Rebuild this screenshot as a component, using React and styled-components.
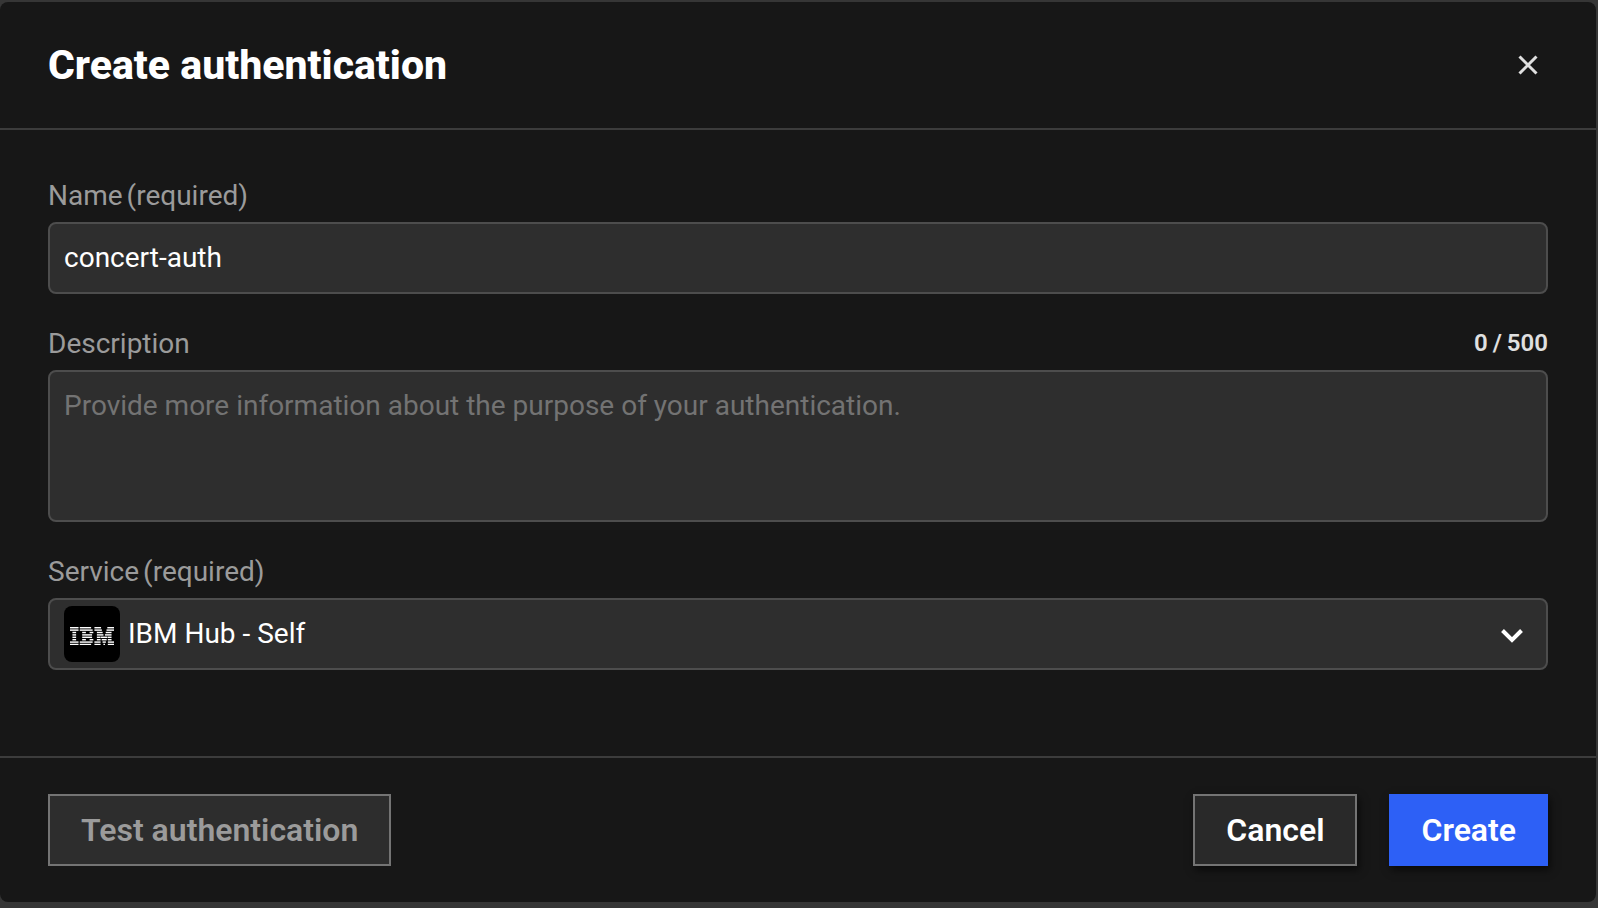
import React, { useState } from "react";
import styled, { createGlobalStyle } from "styled-components";

const GlobalStyle = createGlobalStyle`
  *, *::before, *::after { box-sizing: border-box; }
  html { height: 100%; background: #363636; }
  body {
    margin: 0;
    min-height: 100%;
    background: #363636;
    font-family: Roboto, "Liberation Sans", sans-serif;
    color: #ffffff;
  }
`;

const Backdrop = styled.div`
  min-height: 100vh;
  display: flex;
  padding: 2px 2px 6px 0;
`;

const Dialog = styled.section`
  flex: 1;
  display: flex;
  flex-direction: column;
  background: #171717;
  border-radius: 8px;
`;

const Header = styled.header`
  display: flex;
  align-items: center;
  justify-content: space-between;
  padding: 39px 48px;
  border-bottom: 2px solid #3c3c3c;
`;

const Title = styled.h1`
  margin: 0;
  font-size: 41px;
  line-height: 48px;
  font-weight: 800;
`;

const CloseButton = styled.button`
  display: flex;
  align-items: center;
  justify-content: center;
  width: 40px;
  height: 40px;
  padding: 0;
  border: 0;
  background: transparent;
  color: #e0e0e0;
  cursor: pointer;
`;

const Form = styled.form`
  flex: 1;
  display: flex;
  flex-direction: column;
`;

const Body = styled.div`
  flex: 1;
  display: flex;
  flex-direction: column;
  gap: 32px;
  padding: 48px 48px 86px;
`;

const Field = styled.div`
  display: flex;
  flex-direction: column;
  gap: 8px;
`;

const LabelRow = styled.div`
  display: flex;
  align-items: flex-start;
  justify-content: space-between;
`;

const Label = styled.label`
  display: flex;
  gap: 4px;
  font-size: 28px;
  line-height: 36px;
  color: #9b9b9b;
`;

const Counter = styled.span`
  display: flex;
  gap: 5px;
  font-size: 24px;
  line-height: 34px;
  font-weight: 600;
  color: #e0e0e0;
`;

const controlStyles = `
  display: block;
  width: 100%;
  border: 2px solid #4d4d4d;
  border-radius: 8px;
  background: #2e2e2e;
  color: #ffffff;
  font-family: inherit;
  font-size: 28px;
  outline: none;
`;

const TextInput = styled.input`
  ${controlStyles}
  height: 72px;
  padding: 0 14px 2px;
`;

const TextArea = styled.textarea`
  ${controlStyles}
  height: 152px;
  padding: 16px 14px;
  line-height: 36px;
  resize: none;
  &::placeholder { color: #737373; opacity: 1; }
`;

const SelectWrap = styled.div`
  position: relative;
`;

const Select = styled.select`
  ${controlStyles}
  appearance: none;
  height: 72px;
  padding: 0 72px 2px 78px;
`;

const ServiceLogo = styled.span`
  position: absolute;
  left: 16px;
  top: 8px;
  display: flex;
  align-items: center;
  justify-content: center;
  width: 56px;
  height: 56px;
  padding-top: 4px;
  border-radius: 8px;
  background: #000000;
  pointer-events: none;
`;

const Chevron = styled.svg`
  position: absolute;
  right: 24px;
  top: 30px;
  pointer-events: none;
`;

const Footer = styled.footer`
  display: flex;
  align-items: center;
  justify-content: space-between;
  padding: 36px 48px;
  border-top: 2px solid #3c3c3c;
`;

const Actions = styled.div`
  display: flex;
  gap: 32px;
`;

const Button = styled.button`
  height: 72px;
  padding: 0 ${(p) => (p.$primary ? 32 : 31)}px;
  border: ${(p) => (p.$primary ? "0" : "2px solid #747474")};
  background: ${(p) => (p.$primary ? "#2d60f6" : "#292929")};
  color: #ffffff;
  font-family: inherit;
  font-size: 32px;
  line-height: 40px;
  font-weight: 600;
  box-shadow: 2px 4px 8px rgba(0, 0, 0, 0.6);
  cursor: pointer;
  &:disabled {
    background: #2d2d2d;
    color: #9b9b9b;
    box-shadow: none;
    cursor: default;
  }
`;

// Each row lists the [start, end] segments of one of the eight logo bars.
const LOGO_BARS = [
  [[0, 194], [222, 480], [555, 706], [848, 1000]],
  [[0, 194], [222, 514], [555, 724], [830, 1000]],
  [[55, 139], [277, 361], [445, 530], [611, 742], [812, 944]],
  [[55, 139], [277, 502], [611, 760], [794, 944]],
  [[55, 139], [277, 502], [611, 695], [703, 851], [860, 944]],
  [[55, 139], [277, 361], [445, 530], [611, 695], [721, 833], [860, 944]],
  [[0, 194], [222, 514], [555, 695], [740, 815], [860, 1000]],
  [[0, 194], [222, 480], [555, 695], [759, 796], [860, 1000]],
];

function IbmLogo() {
  return (
    <svg width="44" height="18" viewBox="0 0 1000 402" preserveAspectRatio="none" fill="#ffffff" aria-hidden="true">
      {LOGO_BARS.map((row, i) =>
        row.map(([a, b]) => (
          <rect key={`${i}-${a}`} x={a} y={i * 53.5} width={b - a} height="32" />
        ))
      )}
    </svg>
  );
}

export default function App() {
  const [name, setName] = useState("concert-auth");
  const [description, setDescription] = useState("");

  return (
    <>
      <GlobalStyle />
      <Backdrop>
        <Dialog role="dialog" aria-labelledby="dialog-title">
          <Header>
            <Title id="dialog-title">Create authentication</Title>
            <CloseButton type="button" aria-label="Close">
              <svg width="20" height="20" viewBox="0 0 20 20" fill="none" stroke="currentColor" strokeWidth="3" aria-hidden="true">
                <path d="M1.5 1.5l17 17M18.5 1.5l-17 17" />
              </svg>
            </CloseButton>
          </Header>
          <Form onSubmit={(e) => e.preventDefault()}>
            <Body>
              <Field>
                <Label htmlFor="auth-name"><span>Name</span><span>(required)</span></Label>
                <TextInput id="auth-name" type="text" required value={name} onChange={(e) => setName(e.target.value)} />
              </Field>
              <Field>
                <LabelRow>
                  <Label htmlFor="auth-description">Description</Label>
                  <Counter><span>{description.length}</span><span>/</span><span>500</span></Counter>
                </LabelRow>
                <TextArea
                  id="auth-description"
                  maxLength={500}
                  placeholder="Provide more information about the purpose of your authentication."
                  value={description}
                  onChange={(e) => setDescription(e.target.value)}
                />
              </Field>
              <Field>
                <Label htmlFor="auth-service"><span>Service</span><span>(required)</span></Label>
                <SelectWrap>
                  <Select id="auth-service" required defaultValue="ibm-hub-self">
                    <option value="ibm-hub-self">IBM Hub - Self</option>
                  </Select>
                  <ServiceLogo><IbmLogo /></ServiceLogo>
                  <Chevron width="24" height="16" viewBox="0 0 24 16" fill="none" stroke="#ffffff" strokeWidth="4" aria-hidden="true">
                    <path d="M2.5 2.5l9.5 9.5 9.5-9.5" />
                  </Chevron>
                </SelectWrap>
              </Field>
            </Body>
            <Footer>
              <Button type="button" disabled>Test authentication</Button>
              <Actions>
                <Button type="button">Cancel</Button>
                <Button type="submit" $primary>Create</Button>
              </Actions>
            </Footer>
          </Form>
        </Dialog>
      </Backdrop>
    </>
  );
}
